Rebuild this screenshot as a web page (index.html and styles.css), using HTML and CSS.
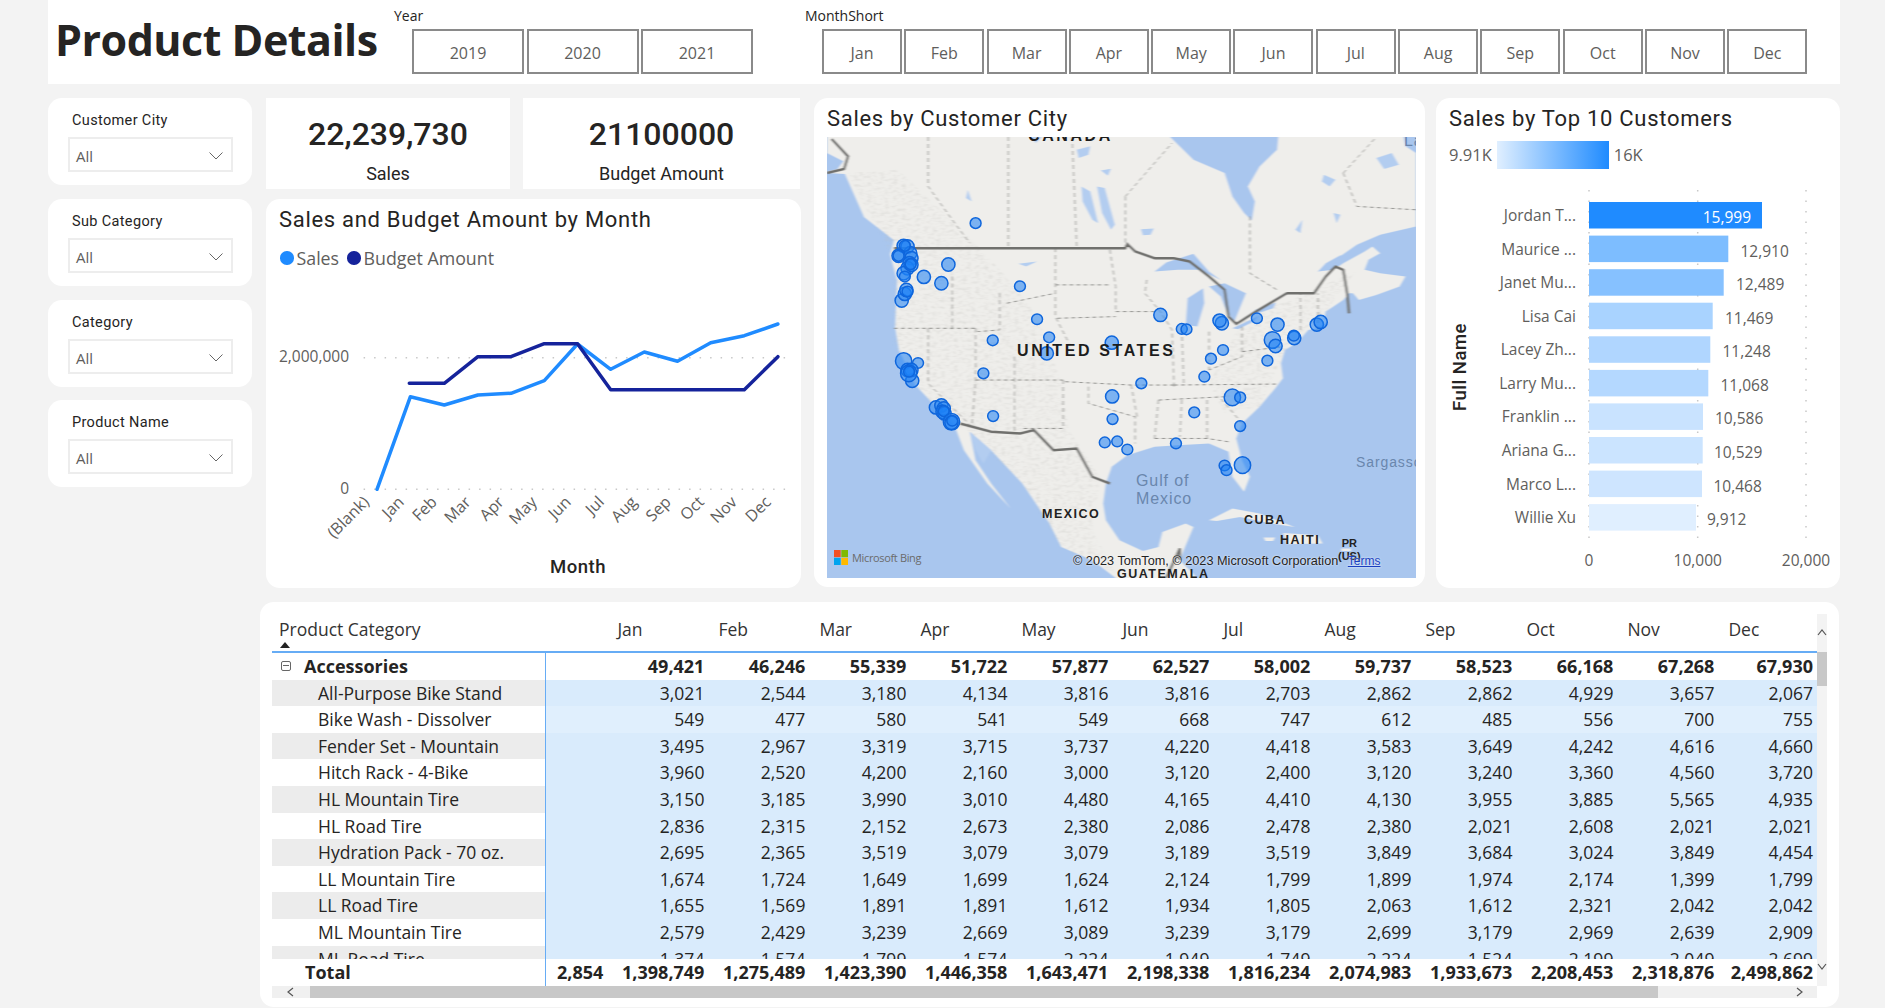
FILE: index.html
```html
<!DOCTYPE html>
<html lang="en">
<head>
    <meta charset="UTF-8">
    <meta name="viewport" content="width=device-width, initial-scale=1.0">
    <title>Product Details</title>
    <link rel="stylesheet" href="styles.css">
</head>
<body>
    <div class="page">
        <header class="top-bar">
            <h1>Product Details</h1>
            <div class="button-slicer year-slicer">
                <span class="slicer-caption">Year</span>
                <div class="slicer-buttons">
                    <button class="slicer-btn">2019</button>
                    <button class="slicer-btn">2020</button>
                    <button class="slicer-btn">2021</button>
                </div>
            </div>
            <div class="button-slicer month-slicer">
                <span class="slicer-caption">MonthShort</span>
                <div class="slicer-buttons">
                    <button class="slicer-btn">Jan</button>
                    <button class="slicer-btn">Feb</button>
                    <button class="slicer-btn">Mar</button>
                    <button class="slicer-btn">Apr</button>
                    <button class="slicer-btn">May</button>
                    <button class="slicer-btn">Jun</button>
                    <button class="slicer-btn">Jul</button>
                    <button class="slicer-btn">Aug</button>
                    <button class="slicer-btn">Sep</button>
                    <button class="slicer-btn">Oct</button>
                    <button class="slicer-btn">Nov</button>
                    <button class="slicer-btn">Dec</button>
                </div>
            </div>
        </header>

        <div class="dashboard">
            <aside class="filters">
                <div class="filter-card">
                    <label class="filter-title">Customer City</label>
                    <div class="dropdown"><span>All</span><svg width="14" height="8" viewBox="0 0 14 8"><polyline points="0.5,0.5 7,7 13.5,0.5"/></svg></div>
                </div>
                <div class="filter-card">
                    <label class="filter-title">Sub Category</label>
                    <div class="dropdown"><span>All</span><svg width="14" height="8" viewBox="0 0 14 8"><polyline points="0.5,0.5 7,7 13.5,0.5"/></svg></div>
                </div>
                <div class="filter-card">
                    <label class="filter-title">Category</label>
                    <div class="dropdown"><span>All</span><svg width="14" height="8" viewBox="0 0 14 8"><polyline points="0.5,0.5 7,7 13.5,0.5"/></svg></div>
                </div>
                <div class="filter-card">
                    <label class="filter-title">Product Name</label>
                    <div class="dropdown"><span>All</span><svg width="14" height="8" viewBox="0 0 14 8"><polyline points="0.5,0.5 7,7 13.5,0.5"/></svg></div>
                </div>
            </aside>

            <section class="center-col">
                <div class="kpi-row">
                    <div class="kpi-card kpi-sales">
                        <div class="kpi-value">22,239,730</div>
                        <div class="kpi-label">Sales</div>
                    </div>
                    <div class="kpi-card kpi-budget">
                        <div class="kpi-value">21100000</div>
                        <div class="kpi-label">Budget Amount</div>
                    </div>
                </div>
                <div class="card line-card">
                    <h2 class="card-title">Sales and Budget Amount by Month</h2>
                    <div class="legend">
                        <span class="legend-dot dot-sales"></span><span class="legend-text">Sales</span>
                        <span class="legend-dot dot-budget"></span><span class="legend-text">Budget Amount</span>
                    </div>
                    <svg class="chart" width="535" height="313" viewBox="0 0 535 313">
                        <line class="grid-h" x1="97.6" y1="82.7" x2="520.8" y2="82.7"/>
                        <line class="grid-h" x1="97.6" y1="214.3" x2="520.8" y2="214.3"/>
                        <text class="axis-text" x="83" y="87" text-anchor="end">2,000,000</text>
                        <text class="axis-text" x="83" y="219" text-anchor="end">0</text>
                        <polyline class="line-sales" points="111,214.3 144.4,121.7 178.3,130 211.9,120 245,118.3 278.3,105.7 311.5,69 344.7,94.3 378.3,77 411.5,86.3 444.7,67.7 478.3,60.7 511.9,49"/>
                        <polyline class="line-budget" points="143.3,108.3 178.3,108.3 211.9,81.7 245,81.7 278.3,68.7 311.5,68.7 344.7,114.7 478.3,114.7 511.9,81.7"/>
                        <text class="axis-text month-text" transform="translate(104,228) rotate(-45)" text-anchor="end">(Blank)</text>
                        <text class="axis-text month-text" transform="translate(139,228) rotate(-45)" text-anchor="end">Jan</text>
                        <text class="axis-text month-text" transform="translate(172,228) rotate(-45)" text-anchor="end">Feb</text>
                        <text class="axis-text month-text" transform="translate(206,228) rotate(-45)" text-anchor="end">Mar</text>
                        <text class="axis-text month-text" transform="translate(239,228) rotate(-45)" text-anchor="end">Apr</text>
                        <text class="axis-text month-text" transform="translate(272,228) rotate(-45)" text-anchor="end">May</text>
                        <text class="axis-text month-text" transform="translate(306,228) rotate(-45)" text-anchor="end">Jun</text>
                        <text class="axis-text month-text" transform="translate(339,228) rotate(-45)" text-anchor="end">Jul</text>
                        <text class="axis-text month-text" transform="translate(372,228) rotate(-45)" text-anchor="end">Aug</text>
                        <text class="axis-text month-text" transform="translate(406,228) rotate(-45)" text-anchor="end">Sep</text>
                        <text class="axis-text month-text" transform="translate(439,228) rotate(-45)" text-anchor="end">Oct</text>
                        <text class="axis-text month-text" transform="translate(472,228) rotate(-45)" text-anchor="end">Nov</text>
                        <text class="axis-text month-text" transform="translate(506,228) rotate(-45)" text-anchor="end">Dec</text>
                        <text class="axis-title" x="312" y="298" text-anchor="middle">Month</text>
                    </svg>
                </div>
            </section>

            <section class="card map-card">
                <h2 class="card-title">Sales by Customer City</h2>
                <div class="map">
                    <svg class="map-svg" width="589" height="441" viewBox="18 22 1514 1321" preserveAspectRatio="none">
                        <defs>
                            <filter id="relief" x="0" y="0" width="100%" height="100%">
                                <feTurbulence type="fractalNoise" baseFrequency="0.09 0.11" numOctaves="3" seed="4"/>
                                <feColorMatrix values="0 0 0 0 0.5  0 0 0 0 0.5  0 0 0 0 0.48  2.4 0 0 0 -1.05"/>
                                <feComposite in2="SourceGraphic" operator="in"/>
                            </filter>
                            <filter id="soften" x="0" y="0" width="100%" height="100%">
                                <feGaussianBlur stdDeviation="2.4 2"/>
                            </filter>
                        </defs>
                        <rect class="water" x="18" y="22" width="1514" height="1321"/>
                        <g filter="url(#soften)">
                            <path class="land" d="M18,22 L1532,22 L1532,290 L1440,315 L1380,345 L1330,385 L1280,425 L1320,420 L1345,400 L1400,365 L1420,350 L1440,370 L1410,390 L1400,420 L1440,430 L1505,440 L1490,470 L1430,495 L1385,510 L1370,490 L1360,490 L1345,510 L1320,530 L1300,545 L1295,565 L1305,575 L1280,595 L1255,600 L1225,640 L1195,660 L1185,700 L1190,745 L1170,775 L1130,830 L1085,880 L1070,925 L1085,990 L1105,1040 L1090,1085 L1060,1040 L1050,965 L1000,940 L920,945 L860,950 L790,975 L750,1010 L735,1060 L728,1120 L735,1170 L770,1230 L830,1262 L870,1250 L880,1205 L940,1180 L960,1190 L935,1260 L925,1290 L970,1343 L760,1343 L700,1290 L620,1250 L590,1180 L520,1060 L440,960 L385,905 L400,990 L440,1060 L490,1135 L430,1060 L370,960 L345,885 L290,820 L245,765 L203,661 L193,592 L198,451 L180,373 L190,331 L113,262 L64,133 L18,130 Z"/>
                            <path class="land" d="M1000,1170 L1060,1135 L1130,1150 L1220,1190 L1160,1180 L1080,1160 L1020,1172 Z M1190,1208 L1280,1215 L1292,1240 L1200,1242 Z M1140,1222 L1170,1222 L1165,1232 L1145,1232 Z M1340,1255 L1365,1255 L1365,1262 L1340,1262 Z"/>
                            <path class="relief" filter="url(#relief)" d="M70,130 L200,120 L300,230 L390,330 L470,430 L560,560 L620,760 L640,900 L720,1040 L700,1200 L760,1330 L620,1250 L520,1060 L385,905 L345,885 L290,820 L245,765 L192,650 L190,385 L130,260 Z M1090,560 L1230,500 L1380,420 L1300,545 L1195,660 L1130,830 L1040,850 L1000,760 Z"/>
                            <path class="water" d="M900,22 L960,90 L1040,130 L1060,200 L1090,250 L1110,272 L1118,215 L1100,170 L1130,110 L1175,60 L1178,22 Z M1500,22 L1532,22 L1532,70 L1505,50 Z M18,70 L60,95 L45,118 L18,125 Z"/>
                            <path class="water" d="M860,425 L890,398 L960,372 L1000,425 L1030,450 L975,420 L920,420 Z M945,505 L985,475 L988,520 L970,590 L940,585 Z M1000,470 L1040,460 L1095,490 L1065,575 L1045,545 L1030,500 Z M1060,595 L1125,560 L1115,575 L1075,598 Z M1118,540 L1172,518 L1165,535 L1125,550 Z M1340,375 L1300,400 L1280,425 L1320,410 Z"/>
                            <path class="water-soft" d="M712,170 L732,175 L758,285 L748,300 L725,250 Z M672,170 L695,185 L715,280 L700,270 L675,215 Z M825,298 L858,296 L850,315 L830,316 Z M1222,300 L1240,270 L1235,310 Z M1295,135 L1325,150 L1310,170 L1290,155 Z M1320,250 L1338,255 L1328,280 Z M1430,85 L1470,70 L1488,105 L1450,118 Z M722,122 L748,117 L740,138 Z M540,22 L570,22 L555,40 Z M660,60 L695,50 L690,75 L665,85 Z M510,402 L558,395 L530,410 Z M380,180 L390,215 L375,205 Z M385,905 L440,960 L420,1000 L400,960 Z"/>
                            <path class="state-line" d="M278,22 L278,170 L340,270 L385,340 M484,22 L484,355 M648,22 L660,355 M785,200 L785,355 M785,200 L905,40 M480,520 L605,490 M605,355 L605,490 L605,560 L640,640 M745,360 L760,470 L760,545 M605,465 L745,465 M610,565 L760,560 M760,545 L865,545 M340,440 L340,595 M190,595 L400,595 M278,595 L278,760 L390,890 M400,595 L400,750 L390,890 M500,680 L500,905 M400,750 L625,750 M462,490 L462,600 L405,605 M625,750 L625,895 L515,895 M630,755 L800,765 L910,765 M690,770 L690,820 L810,860 L810,940 M800,765 L815,860 M910,765 L1180,762 M930,600 L935,760 M1000,605 L1000,720 M1085,590 L1085,680 L1000,720 M870,810 L1040,800 M930,810 L925,920 M995,810 L995,925 L1050,935 M860,925 L995,925 M870,810 L860,925 M840,450 L835,490 L875,545 L905,600 L910,770 M1085,665 L1190,650 M1235,600 L1235,490 M1280,600 L1280,490 M1105,260 L1105,430 L1175,480 M1345,130 L1380,230 L1532,240 M1345,130 L1430,22 M1085,880 L1030,805"/>
                            <polyline class="border-line" points="190,355 785,355 790,343 810,365 860,385 910,385 950,395 1000,440 1040,480 1050,560 1070,582 1120,545 1200,490 1270,490 1300,440 1325,410 1345,420 1355,490 1360,550"/>
                            <polyline class="border-line" points="360,880 440,905 515,910 550,900 600,960 660,955 700,1040 745,1060"/>
                            <polyline class="border-line" points="18,130 62,118 72,80 30,28"/>
                            <polyline class="border-line" points="890,1343 925,1255 925,1290"/>
                        </g>

                        <ellipse class="pin" cx="400" cy="280"/>
                        <ellipse class="pin pin-m" cx="215" cy="348"/>
                        <ellipse class="pin pin-m" cx="225" cy="350"/>
                        <ellipse class="pin pin-m" cx="232" cy="370"/>
                        <ellipse class="pin pin-m" cx="235" cy="385"/>
                        <ellipse class="pin" cx="218" cy="348"/>
                        <ellipse class="pin pin-m" cx="202" cy="378"/>
                        <ellipse class="pin pin-m" cx="230" cy="400"/>
                        <ellipse class="pin pin-m" cx="225" cy="415"/>
                        <ellipse class="pin pin-m" cx="215" cy="430"/>
                        <ellipse class="pin" cx="218" cy="440"/>
                        <ellipse class="pin pin-m" cx="235" cy="405"/>
                        <ellipse class="pin" cx="233" cy="403"/>
                        <ellipse class="pin" cx="202" cy="378"/>
                        <ellipse class="pin pin-m" cx="330" cy="404"/>
                        <ellipse class="pin pin-m" cx="267" cy="441"/>
                        <ellipse class="pin pin-m" cx="312" cy="460"/>
                        <ellipse class="pin pin-m" cx="210" cy="512"/>
                        <ellipse class="pin pin-m" cx="218" cy="492"/>
                        <ellipse class="pin pin-m" cx="222" cy="480"/>
                        <ellipse class="pin" cx="225" cy="485"/>
                        <ellipse class="pin" cx="514" cy="469"/>
                        <ellipse class="pin" cx="558" cy="568"/>
                        <ellipse class="pin" cx="589" cy="622"/>
                        <ellipse class="pin" cx="444" cy="631"/>
                        <ellipse class="pin" cx="420" cy="730"/>
                        <ellipse class="pin" cx="445" cy="858"/>
                        <ellipse class="pin pin-m" cx="750" cy="638"/>
                        <ellipse class="pin pin-m" cx="583" cy="670"/>
                        <ellipse class="pin pin-m" cx="875" cy="555"/>
                        <ellipse class="pin" cx="930" cy="597"/>
                        <ellipse class="pin" cx="942" cy="598"/>
                        <ellipse class="pin pin-m" cx="1033" cy="580"/>
                        <ellipse class="pin pin-m" cx="1027" cy="572"/>
                        <ellipse class="pin" cx="1123" cy="565"/>
                        <ellipse class="pin pin-m" cx="1176" cy="584"/>
                        <ellipse class="pin pin-m" cx="1277" cy="584"/>
                        <ellipse class="pin pin-m" cx="1287" cy="576"/>
                        <ellipse class="pin pin-l" cx="1163" cy="630"/>
                        <ellipse class="pin pin-m" cx="1171" cy="648"/>
                        <ellipse class="pin pin-m" cx="1219" cy="624"/>
                        <ellipse class="pin" cx="1218" cy="617"/>
                        <ellipse class="pin" cx="1036" cy="660"/>
                        <ellipse class="pin" cx="1005" cy="686"/>
                        <ellipse class="pin" cx="1150" cy="692"/>
                        <ellipse class="pin" cx="988" cy="740"/>
                        <ellipse class="pin" cx="826" cy="760"/>
                        <ellipse class="pin pin-m" cx="751" cy="799"/>
                        <ellipse class="pin pin-l" cx="1060" cy="802"/>
                        <ellipse class="pin" cx="1080" cy="802"/>
                        <ellipse class="pin" cx="752" cy="867"/>
                        <ellipse class="pin" cx="962" cy="847"/>
                        <ellipse class="pin" cx="1080" cy="888"/>
                        <ellipse class="pin" cx="732" cy="937"/>
                        <ellipse class="pin" cx="764" cy="934"/>
                        <ellipse class="pin" cx="790" cy="958"/>
                        <ellipse class="pin" cx="915" cy="940"/>
                        <ellipse class="pin" cx="1040" cy="1006"/>
                        <ellipse class="pin" cx="1045" cy="1020"/>
                        <ellipse class="pin pin-l" cx="1086" cy="1005"/>
                        <ellipse class="pin pin-l" cx="215" cy="693"/>
                        <ellipse class="pin" cx="252" cy="699"/>
                        <ellipse class="pin pin-m" cx="237" cy="752"/>
                        <ellipse class="pin pin-m" cx="225" cy="720"/>
                        <ellipse class="pin pin-m" cx="235" cy="720"/>
                        <ellipse class="pin pin-l" cx="228" cy="730"/>
                        <ellipse class="pin" cx="229" cy="725"/>
                        <ellipse class="pin pin-m" cx="298" cy="832"/>
                        <ellipse class="pin pin-m" cx="312" cy="826"/>
                        <ellipse class="pin pin-m" cx="318" cy="835"/>
                        <ellipse class="pin pin-m" cx="315" cy="845"/>
                        <ellipse class="pin pin-m" cx="320" cy="850"/>
                        <ellipse class="pin" cx="318" cy="843"/>
                        <ellipse class="pin pin-l" cx="338" cy="875"/>
                        <ellipse class="pin pin-m" cx="338" cy="878"/>
                        <ellipse class="pin" cx="340" cy="872"/>
                    </svg>
                    <span class="map-label label-country label-canada">CANADA</span>
                    <span class="map-label label-sea label-la">La</span>
                    <span class="map-label label-country label-us">UNITED STATES</span>
                    <span class="map-label label-small label-mexico">MEXICO</span>
                    <span class="map-label label-sea label-gulf">Gulf of<br>Mexico</span>
                    <span class="map-label label-sea label-sargasso">Sargasso</span>
                    <span class="map-label label-small label-cuba">CUBA</span>
                    <span class="map-label label-small label-haiti">HAITI</span>
                    <span class="map-label label-tiny label-pr">PR<br>(US)</span>
                    <span class="map-label label-small label-guatemala">GUATEMALA</span>
                    <div class="bing-logo">
                        <svg width="14" height="15" viewBox="0 0 14 15">
                            <rect width="6.7" height="7.2" fill="#f25022"/>
                            <rect x="7.3" width="6.7" height="7.2" fill="#7fba00"/>
                            <rect y="7.8" width="6.7" height="7.2" fill="#00a4ef"/>
                            <rect x="7.3" y="7.8" width="6.7" height="7.2" fill="#ffb900"/>
                        </svg>
                        <span>Microsoft Bing</span>
                    </div>
                    <div class="map-credit">© 2023 TomTom, © 2023 Microsoft Corporation <a class="map-terms">Terms</a></div>
                </div>
            </section>

            <section class="card customers-card">
                <h2 class="card-title">Sales by Top 10 Customers</h2>
                <div class="color-scale">
                    <span>9.91K</span>
                    <div class="scale-bar"></div>
                    <span>16K</span>
                </div>
                <svg class="chart" width="404" height="408" viewBox="0 0 404 408">
                    <line class="grid-v" x1="153" y1="10" x2="153" y2="365"/>
                    <line class="grid-v" x1="261.7" y1="10" x2="261.7" y2="365"/>
                    <line class="grid-v" x1="370" y1="10" x2="370" y2="365"/>
                    <text class="axis-title" transform="translate(30,187) rotate(-90)" text-anchor="middle">Full Name</text>

                    <rect x="153" y="22" width="173" height="26.5" fill="#1f8bff"/>
                    <rect x="153" y="55.6" width="139.3" height="26.5" fill="#7dbdff"/>
                    <rect x="153" y="89.2" width="134.7" height="26.5" fill="#86c1ff"/>
                    <rect x="153" y="122.7" width="123.7" height="26.5" fill="#a9d3ff"/>
                    <rect x="153" y="156.3" width="121.3" height="26.5" fill="#b0d6ff"/>
                    <rect x="153" y="189.9" width="119.3" height="26.5" fill="#b4d8ff"/>
                    <rect x="153" y="223.4" width="114" height="26.5" fill="#c9e3ff"/>
                    <rect x="153" y="257" width="113.7" height="26.5" fill="#cbe4ff"/>
                    <rect x="153" y="290.6" width="113" height="26.5" fill="#cee5ff"/>
                    <rect x="153" y="324.1" width="107" height="26.5" fill="#e0efff"/>

                    <text class="axis-text bar-text" x="140" y="41" text-anchor="end">Jordan T...</text>
                    <text class="axis-text bar-text" x="140" y="74.6" text-anchor="end">Maurice ...</text>
                    <text class="axis-text bar-text" x="140" y="108" text-anchor="end">Janet Mu...</text>
                    <text class="axis-text bar-text" x="140" y="141.7" text-anchor="end">Lisa Cai</text>
                    <text class="axis-text bar-text" x="140" y="175.3" text-anchor="end">Lacey Zh...</text>
                    <text class="axis-text bar-text" x="140" y="208.9" text-anchor="end">Larry Mu...</text>
                    <text class="axis-text bar-text" x="140" y="242.4" text-anchor="end">Franklin ...</text>
                    <text class="axis-text bar-text" x="140" y="276" text-anchor="end">Ariana G...</text>
                    <text class="axis-text bar-text" x="140" y="309.6" text-anchor="end">Marco L...</text>
                    <text class="axis-text bar-text" x="140" y="343.1" text-anchor="end">Willie Xu</text>

                    <text class="axis-text bar-text bar-inside" x="315" y="43" text-anchor="end">15,999</text>
                    <text class="axis-text bar-text" x="304.5" y="76.6">12,910</text>
                    <text class="axis-text bar-text" x="300" y="110.2">12,489</text>
                    <text class="axis-text bar-text" x="289" y="143.7">11,469</text>
                    <text class="axis-text bar-text" x="286.5" y="177.3">11,248</text>
                    <text class="axis-text bar-text" x="284.5" y="210.9">11,068</text>
                    <text class="axis-text bar-text" x="279" y="244.4">10,586</text>
                    <text class="axis-text bar-text" x="278" y="278">10,529</text>
                    <text class="axis-text bar-text" x="277.5" y="311.6">10,468</text>
                    <text class="axis-text bar-text" x="271" y="345.1">9,912</text>

                    <text class="axis-text bar-text" x="153" y="386" text-anchor="middle">0</text>
                    <text class="axis-text bar-text" x="261.7" y="386" text-anchor="middle">10,000</text>
                    <text class="axis-text bar-text" x="370" y="386" text-anchor="middle">20,000</text>
                </svg>
            </section>
        </div>

        <section class="matrix">
            <div class="matrix-main">
                <div class="m-row m-head">
                    <div class="m-corner">Product Category<span class="sort-arrow"></span></div>
                    <div></div>
                    <div>Jan</div><div>Feb</div><div>Mar</div><div>Apr</div><div>May</div><div>Jun</div><div>Jul</div><div>Aug</div><div>Sep</div><div>Oct</div><div>Nov</div><div>Dec</div>
                </div>
                <div class="m-body">
                    <div class="m-row m-group">
                        <div class="m-label"><span class="collapse-icon"></span>Accessories</div>
                        <div></div>
                        <div>49,421</div><div>46,246</div><div>55,339</div><div>51,722</div><div>57,877</div><div>62,527</div><div>58,002</div><div>59,737</div><div>58,523</div><div>66,168</div><div>67,268</div><div>67,930</div>
                    </div>
                    <div class="m-row m-item shaded">
                        <div class="m-label">All-Purpose Bike Stand</div>
                        <div></div>
                        <div>3,021</div><div>2,544</div><div>3,180</div><div>4,134</div><div>3,816</div><div>3,816</div><div>2,703</div><div>2,862</div><div>2,862</div><div>4,929</div><div>3,657</div><div>2,067</div>
                    </div>
                    <div class="m-row m-item low">
                        <div class="m-label">Bike Wash - Dissolver</div>
                        <div></div>
                        <div>549</div><div>477</div><div>580</div><div>541</div><div>549</div><div>668</div><div>747</div><div>612</div><div>485</div><div>556</div><div>700</div><div>755</div>
                    </div>
                    <div class="m-row m-item shaded">
                        <div class="m-label">Fender Set - Mountain</div>
                        <div></div>
                        <div>3,495</div><div>2,967</div><div>3,319</div><div>3,715</div><div>3,737</div><div>4,220</div><div>4,418</div><div>3,583</div><div>3,649</div><div>4,242</div><div>4,616</div><div>4,660</div>
                    </div>
                    <div class="m-row m-item">
                        <div class="m-label">Hitch Rack - 4-Bike</div>
                        <div></div>
                        <div>3,960</div><div>2,520</div><div>4,200</div><div>2,160</div><div>3,000</div><div>3,120</div><div>2,400</div><div>3,120</div><div>3,240</div><div>3,360</div><div>4,560</div><div>3,720</div>
                    </div>
                    <div class="m-row m-item shaded">
                        <div class="m-label">HL Mountain Tire</div>
                        <div></div>
                        <div>3,150</div><div>3,185</div><div>3,990</div><div>3,010</div><div>4,480</div><div>4,165</div><div>4,410</div><div>4,130</div><div>3,955</div><div>3,885</div><div>5,565</div><div>4,935</div>
                    </div>
                    <div class="m-row m-item">
                        <div class="m-label">HL Road Tire</div>
                        <div></div>
                        <div>2,836</div><div>2,315</div><div>2,152</div><div>2,673</div><div>2,380</div><div>2,086</div><div>2,478</div><div>2,380</div><div>2,021</div><div>2,608</div><div>2,021</div><div>2,021</div>
                    </div>
                    <div class="m-row m-item shaded">
                        <div class="m-label">Hydration Pack - 70 oz.</div>
                        <div></div>
                        <div>2,695</div><div>2,365</div><div>3,519</div><div>3,079</div><div>3,079</div><div>3,189</div><div>3,519</div><div>3,849</div><div>3,684</div><div>3,024</div><div>3,849</div><div>4,454</div>
                    </div>
                    <div class="m-row m-item">
                        <div class="m-label">LL Mountain Tire</div>
                        <div></div>
                        <div>1,674</div><div>1,724</div><div>1,649</div><div>1,699</div><div>1,624</div><div>2,124</div><div>1,799</div><div>1,899</div><div>1,974</div><div>2,174</div><div>1,399</div><div>1,799</div>
                    </div>
                    <div class="m-row m-item shaded">
                        <div class="m-label">LL Road Tire</div>
                        <div></div>
                        <div>1,655</div><div>1,569</div><div>1,891</div><div>1,891</div><div>1,612</div><div>1,934</div><div>1,805</div><div>2,063</div><div>1,612</div><div>2,321</div><div>2,042</div><div>2,042</div>
                    </div>
                    <div class="m-row m-item">
                        <div class="m-label">ML Mountain Tire</div>
                        <div></div>
                        <div>2,579</div><div>2,429</div><div>3,239</div><div>2,669</div><div>3,089</div><div>3,239</div><div>3,179</div><div>2,699</div><div>3,179</div><div>2,969</div><div>2,639</div><div>2,909</div>
                    </div>
                    <div class="m-row m-item shaded">
                        <div class="m-label">ML Road Tire</div>
                        <div></div>
                        <div>1,374</div><div>1,574</div><div>1,799</div><div>1,574</div><div>2,224</div><div>1,949</div><div>1,749</div><div>2,224</div><div>1,524</div><div>2,199</div><div>2,049</div><div>2,699</div>
                    </div>
                </div>
                <div class="m-row m-total">
                    <div class="m-label">Total</div>
                    <div>2,854</div><div>1,398,749</div><div>1,275,489</div><div>1,423,390</div><div>1,446,358</div><div>1,643,471</div><div>2,198,338</div><div>1,816,234</div><div>2,074,983</div><div>1,933,673</div><div>2,208,453</div><div>2,318,876</div><div>2,498,862</div>
                </div>
                <div class="hscroll">
                    <svg class="scroll-arrow" width="38" height="12" viewBox="0 0 38 12"><polyline points="21,2 16,6 21,10"/></svg>
                    <div class="hscroll-thumb"></div>
                    <svg class="scroll-arrow" width="159" height="12" viewBox="0 0 159 12"><polyline points="139,2 144,6 139,10"/></svg>
                </div>
            </div>
            <div class="vscroll">
                <svg class="scroll-arrow" width="10" height="38" viewBox="0 0 10 38"><polyline points="1,21 5,16 9,21"/></svg>
                <div class="vscroll-thumb"></div>
                <svg class="scroll-arrow vscroll-down" width="10" height="10" viewBox="0 0 10 10"><polyline points="1,2 5,7 9,2"/></svg>
            </div>
        </section>
    </div>
</body>
</html>
```

FILE: styles.css
```css
:root {
    --page-bg: #f3f3f3;
    --card-bg: #ffffff;
    --text-dark: #252423;
    --text-muted: #605e5c;
    --sales-blue: #1f8bff;
    --budget-blue: #15239b;
    --rule-blue: #66acf5;
    --din: Roboto, "Liberation Sans", sans-serif;
    --ui: "Open Sans", "Liberation Sans", sans-serif;
}

* {
    margin: 0;
    padding: 0;
    box-sizing: border-box;
}

body {
    background-color: var(--page-bg);
    color: var(--text-dark);
    font-family: var(--ui);
    overflow: hidden;
}

.page {
    width: 1885px;
    height: 1008px;
    padding-left: 48px;
}

/* top bar with the title and the two button slicers */
.top-bar {
    display: flex;
    width: 1792px;
    height: 84px;
    background-color: var(--card-bg);
}

h1 {
    width: 346px;
    padding: 12px 0 0 7px;
    font-size: 43px;
    line-height: 56px;
    font-weight: 700;
    letter-spacing: -0.5px;
    white-space: nowrap;
}

.button-slicer {
    display: flex;
    flex-direction: column;
}

.year-slicer {
    width: 411px;
}

.slicer-caption {
    height: 29px;
    padding-top: 7px;
    font-size: 14px;
    line-height: 18px;
}

.slicer-buttons {
    display: flex;
}

.year-slicer .slicer-buttons {
    gap: 2.5px;
    padding-left: 18px;
}

.month-slicer .slicer-buttons {
    gap: 2.3px;
    padding-left: 17px;
}

.slicer-btn {
    height: 45px;
    padding-top: 2px;
    border: 2px solid #8a8a8a;
    background-color: var(--card-bg);
    color: var(--text-muted);
    font-family: var(--ui);
    font-size: 16px;
}

.year-slicer .slicer-btn {
    width: 112px;
}

.month-slicer .slicer-btn {
    width: 80px;
}

/* main row */
.dashboard {
    display: flex;
    margin-top: 14px;
    height: 490px;
}

.filters {
    display: flex;
    flex-direction: column;
    gap: 14px;
    width: 204px;
    margin-right: 14px;
}

.filter-card {
    height: 87px;
    padding: 13px 20px 0;
    background-color: var(--card-bg);
    border-radius: 14px;
}

.filter-card:last-child {
    margin-top: -1px;
}

.filter-title {
    display: block;
    height: 26px;
    padding-left: 4px;
    font-family: var(--din);
    font-size: 14.5px;
    line-height: 19px;
    letter-spacing: 0.35px;
}

.dropdown {
    display: flex;
    align-items: center;
    justify-content: space-between;
    width: 165px;
    height: 35px;
    padding: 2px 8px 0 6px;
    border: 2px solid #ededed;
    color: var(--text-muted);
    font-size: 15px;
}

.dropdown svg polyline {
    fill: none;
    stroke: #666666;
    stroke-width: 1;
}

.center-col {
    display: flex;
    flex-direction: column;
    gap: 10px;
    width: 535px;
    margin-right: 13px;
}

.kpi-row {
    display: flex;
    gap: 13px;
    height: 91px;
}

.kpi-card {
    overflow: hidden;
    background-color: var(--card-bg);
    text-align: center;
}

.kpi-sales {
    width: 244px;
}

.kpi-budget {
    width: 277px;
}

.kpi-value {
    padding-top: 14px;
    font-family: var(--din);
    font-size: 32px;
    line-height: 44px;
    font-weight: 500;
}

.kpi-label {
    padding-top: 6px;
    font-family: var(--din);
    font-size: 18px;
    line-height: 24px;
}

.card {
    background-color: var(--card-bg);
    border-radius: 14px;
}

.card-title {
    padding-left: 13px;
    font-family: var(--din);
    font-size: 22px;
    line-height: 28px;
    font-weight: 400;
    letter-spacing: 0.7px;
}

.line-card {
    height: 390px;
}

.line-card .card-title {
    padding-top: 7px;
    height: 42px;
}

.legend {
    display: flex;
    align-items: center;
    height: 36px;
    padding-left: 14px;
    padding-bottom: 2px;
    margin-bottom: -2px;
    font-size: 17.8px;
    color: var(--text-muted);
}

.legend-dot {
    width: 13.5px;
    height: 13.5px;
    margin-right: 3px;
    border-radius: 50%;
}

.dot-sales {
    background-color: var(--sales-blue);
}

.dot-budget {
    margin-left: 8px;
    background-color: var(--budget-blue);
}

.chart {
    display: block;
}

.grid-h,
.grid-v {
    stroke: #c8c8c8;
    stroke-width: 1.5;
    stroke-dasharray: 1.5 9;
}

.axis-text {
    fill: var(--text-muted);
    font-family: var(--ui);
    font-size: 15.5px;
}

.month-text {
    font-size: 16px;
}

.bar-text {
    font-size: 15.5px;
}

.bar-inside {
    fill: #ffffff;
}

.axis-title {
    fill: var(--text-dark);
    font-family: var(--din);
    font-size: 18.5px;
    font-weight: 500;
    letter-spacing: 0.5px;
}

.line-sales,
.line-budget {
    fill: none;
    stroke-width: 3.5;
    stroke-linejoin: round;
    stroke-linecap: round;
}

.line-sales {
    stroke: var(--sales-blue);
}

.line-budget {
    stroke: var(--budget-blue);
}

/* map */
.map-card {
    width: 611px;
    height: 489px;
    margin-right: 11px;
}

.map-card .card-title {
    height: 39px;
    padding-top: 7px;
}

.map {
    position: relative;
    width: 589px;
    height: 441px;
    margin-left: 13px;
    overflow: hidden;
}

.map-svg {
    display: block;
}

.water {
    fill: #a9c6ee;
}

.water-soft {
    fill: #b3cdf0;
}

.land {
    fill: #efeeeb;
}

.relief {
    fill: #000000;
    opacity: 0.28;
}

.state-line {
    fill: none;
    stroke: #8f8f8c;
    stroke-width: 1;
    stroke-dasharray: 4 3;
    vector-effect: non-scaling-stroke;
}

.border-line {
    fill: none;
    stroke: #6f6f6d;
    stroke-width: 2.5;
    vector-effect: non-scaling-stroke;
}

.pin {
    rx: 14px;
    ry: 16px;
    fill: rgba(30, 130, 245, 0.55);
    stroke: #0f66dc;
    stroke-width: 1.5;
    vector-effect: non-scaling-stroke;
}

.pin-m {
    rx: 17px;
    ry: 20px;
}

.pin-l {
    rx: 21px;
    ry: 25px;
}

.map-label {
    position: absolute;
    white-space: nowrap;
    font-family: "Liberation Sans", sans-serif;
}

.label-country {
    font-size: 16px;
    font-weight: 700;
    letter-spacing: 2.6px;
    color: #1d1d1d;
}

.label-small {
    font-size: 12.5px;
    font-weight: 700;
    letter-spacing: 1.5px;
    color: #222222;
}

.label-tiny {
    font-size: 11px;
    line-height: 13px;
    font-weight: 700;
    color: #222222;
}

.label-sea {
    font-size: 16px;
    letter-spacing: 0.9px;
    color: #6a86ad;
}

.label-canada { left: 201px; top: -10px; }
.label-la { left: 577px; top: -5px; }
.label-us { left: 190px; top: 205px; }
.label-mexico { left: 215px; top: 370px; }
.label-gulf { left: 309px; top: 335px; line-height: 18px; }
.label-sargasso { left: 529px; top: 317px; font-size: 14px; }
.label-cuba { left: 417px; top: 376px; }
.label-haiti { left: 453px; top: 396px; }
.label-pr { left: 511px; top: 400px; text-align: center; }
.label-guatemala { left: 290px; top: 430px; }

.bing-logo {
    position: absolute;
    left: 7px;
    top: 413px;
    display: flex;
    align-items: center;
    gap: 4px;
    color: #6b6b6b;
    font-family: var(--ui);
    font-size: 11px;
    letter-spacing: -0.35px;
}

.map-credit {
    position: absolute;
    left: 246px;
    top: 417px;
    white-space: nowrap;
    color: #222222;
    font-family: "Liberation Sans", sans-serif;
    font-size: 12.7px;
    text-shadow: 0 0 2px #ffffff;
}

.map-terms {
    margin-left: 6px;
    color: #1a3fc0;
    font-size: 12px;
    text-decoration: underline;
}

/* customers bar chart */
.customers-card {
    width: 404px;
    height: 490px;
}

.customers-card .card-title {
    height: 39px;
    padding-top: 7px;
}

.color-scale {
    display: flex;
    align-items: center;
    gap: 5px;
    height: 43px;
    padding-left: 13px;
    padding-bottom: 8px;
    color: var(--text-muted);
    font-size: 16.5px;
}

.scale-bar {
    width: 112px;
    height: 28px;
    background: linear-gradient(to right, #e0efff, #1f8bff);
}

/* matrix */
.matrix {
    display: flex;
    width: 1579px;
    height: 405px;
    margin: 14px 0 0 212px;
    padding: 12px 12px 9px 12px;
    background-color: var(--card-bg);
    border-radius: 14px;
}

.matrix-main {
    width: 1545px;
}

.m-row {
    display: grid;
    grid-template-columns: 274.4px 65px repeat(11, 101px) 94.6px;
    font-size: 17.5px;
    line-height: 26.6px;
    white-space: nowrap;
}

.m-row > div {
    padding-right: 8px;
    text-align: right;
}

.m-row > div:last-child {
    padding-right: 4px;
}

.m-head {
    height: 39px;
    border-bottom: 2px solid var(--rule-blue);
    line-height: 31px;
    color: #333333;
}

.m-head > div {
    padding-left: 6px;
    text-align: left;
}

.m-head > .m-corner {
    position: relative;
    padding-left: 7px;
    text-align: left;
}

.sort-arrow {
    position: absolute;
    left: 8px;
    bottom: 3px;
    border-left: 5.5px solid transparent;
    border-right: 5.5px solid transparent;
    border-bottom: 6px solid #222222;
}

.m-body {
    height: 306px;
    overflow: hidden;
}

.m-row > .m-label {
    border-right: 1px solid var(--rule-blue);
    text-align: left;
    overflow: hidden;
}

.m-group,
.m-item {
    grid-template-rows: 26.6px;
    line-height: 27.5px;
}

.m-group {
    font-weight: 700;
    font-size: 18px;
}

.m-group > .m-label {
    display: flex;
    align-items: center;
    padding-left: 9px;
}

.collapse-icon {
    position: relative;
    display: inline-block;
    width: 10px;
    height: 10px;
    margin-right: 13px;
    border: 1px solid #666666;
    border-radius: 2px;
}

.collapse-icon::after {
    content: "";
    position: absolute;
    left: 1px;
    right: 1px;
    top: 3px;
    height: 1px;
    background-color: #666666;
}

.m-item {
    background-color: #d9ebfc;
}

.m-item.low {
    background-color: #e0effd;
}

.m-item > .m-label {
    padding-left: 46px;
    background-color: var(--card-bg);
}

.m-item.shaded > .m-label {
    background-color: #ececec;
}

.m-total {
    height: 27px;
    font-size: 18px;
    font-weight: 700;
}

.m-total > .m-label {
    padding-left: 33px;
}

.hscroll {
    display: flex;
    height: 12px;
    background-color: #f0f0f0;
}

.hscroll-thumb {
    width: 1349px;
    background-color: #c8c8c8;
}

.scroll-arrow {
    display: block;
    flex-shrink: 0;
}

.scroll-arrow polyline {
    fill: none;
    stroke: #555555;
    stroke-width: 1.2;
}

.vscroll {
    display: flex;
    flex-direction: column;
    width: 10px;
    height: 372px;
    background-color: #f3f3f3;
}

.vscroll-thumb {
    height: 34px;
    background-color: #c8c8c8;
}

.vscroll-down {
    margin-top: auto;
    margin-bottom: 14px;
}
```
